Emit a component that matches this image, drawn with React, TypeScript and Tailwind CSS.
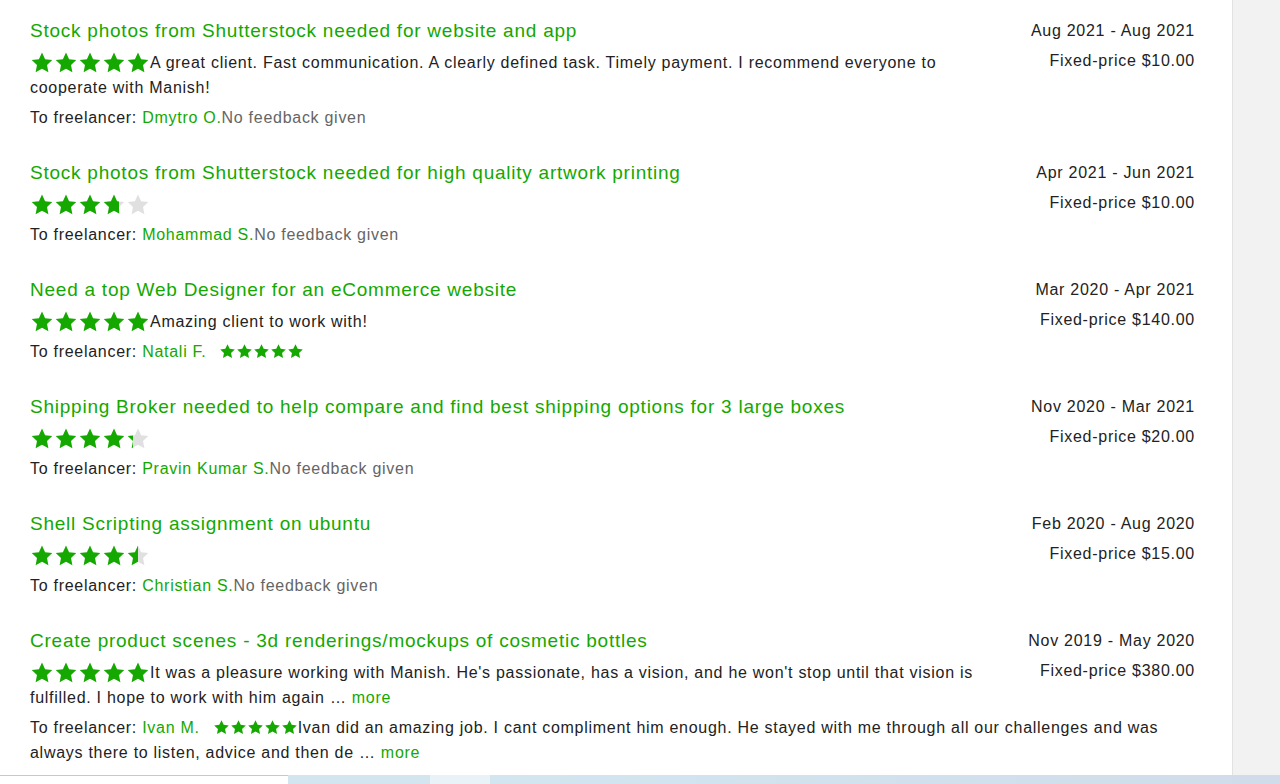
import React from 'react';

interface Job {
    title: string,
    from: string,
    price: string,
    rating: number,
    review?: string,
    reviewMore?: boolean,
    freelancer: string,
    freelancerRating?: number,
    freelancerReview?: string
};

const jobs: Job[] = [
    {
        title: "Stock photos from Shutterstock needed for website and app",
        from: "Aug 2021 - Aug 2021",
        price: "Fixed-price $10.00",
        rating: 5,
        review: "A great client. Fast communication. A clearly defined task. Timely payment. I recommend everyone to cooperate with Manish!",
        freelancer: "Dmytro O."
    },
    {
        title: "Stock photos from Shutterstock needed for high quality artwork printing",
        from: "Apr 2021 - Jun 2021",
        price: "Fixed-price $10.00",
        rating: 3.72,
        freelancer: "Mohammad S."
    },
    {
        title: "Need a top Web Designer for an eCommerce website",
        from: "Mar 2020 - Apr 2021",
        price: "Fixed-price $140.00",
        rating: 5,
        review: "Amazing client to work with!",
        freelancer: "Natali F.",
        freelancerRating: 5
    },
    {
        title: "Shipping Broker needed to help compare and find best shipping options for 3 large boxes",
        from: "Nov 2020 - Mar 2021",
        price: "Fixed-price $20.00",
        rating: 4.25,
        freelancer: "Pravin Kumar S."
    },
    {
        title: "Shell Scripting assignment on ubuntu",
        from: "Feb 2020 - Aug 2020",
        price: "Fixed-price $15.00",
        rating: 4.5,
        freelancer: "Christian S."
    },
    {
        title: "Create product scenes - 3d renderings/mockups of cosmetic bottles",
        from: "Nov 2019 - May 2020",
        price: "Fixed-price $380.00",
        rating: 5,
        review: "It was a pleasure working with Manish. He's passionate, has a vision, and he won't stop until that vision is fulfilled. I hope to work with him again",
        reviewMore: true,
        freelancer: "Ivan M.",
        freelancerRating: 5,
        freelancerReview: "Ivan did an amazing job. I cant compliment him enough. He stayed with me through all our challenges and was always there to listen, advice and then de"
    }
];

const STAR = "M12 1.6l3.1 6.6 7.2.9-5.3 5 1.4 7.2L12 17.8l-6.4 3.5 1.4-7.2-5.3-5 7.2-.9z";

function Star({ fill, size, id }: { fill: number, size: number, id: string }) {
    return (
        <svg width={size} height={size} viewBox="0 0 24 24" className="shrink-0">
            <defs>
                <linearGradient id={id} x1="0" x2="1" y1="0" y2="0">
                    <stop offset={fill} stopColor="#14a800" />
                    <stop offset={fill} stopColor="#e0e0e0" />
                </linearGradient>
            </defs>
            <path d={STAR} fill={`url(#${id})`} />
        </svg>
    );
}

function Stars({ rating, size, id }: { rating: number, size: number, id: string }) {
    return (
        <span className="inline-flex h-[25px] items-center align-top">
            {[0, 1, 2, 3, 4].map((i) => (
                <Star key={i} id={`${id}-${i}`} size={size} fill={Math.max(0, Math.min(1, rating - i))} />
            ))}
        </span>
    );
}

function JobRow({ job, index }: { job: Job, index: number }) {
    return (
        <div className="flex flex-col">
            <div className="flex justify-between">
                <div className="w-[975px]">
                    <div className="text-[19px] leading-[24px] tracking-[0.04em] text-[#14a800]">{job.title}</div>
                    <div className="mt-[7px] text-[16px] leading-[25px] text-[#222]">
                        <Stars rating={job.rating} size={24} id={`s${index}`} />
                        {job.review}
                        {job.reviewMore && <> … <span className="text-[#14a800]">more</span></>}
                    </div>
                </div>
                <div className="flex flex-col items-end text-[16px] leading-[24px] text-[#222]">
                    <div>{job.from}</div>
                    <div className="mt-[6px]">{job.price}</div>
                </div>
            </div>
            <div className="mt-[5px] text-[16px] leading-[25px] text-[#222]">
                To freelancer: <span className="text-[#14a800]">{job.freelancer}</span>
                {job.freelancerRating ? (
                    <>
                        <span className="inline-block w-[13px]" />
                        <Stars rating={job.freelancerRating} size={17} id={`f${index}`} />
                        {job.freelancerReview}
                        {job.freelancerReview && <> … <span className="text-[#14a800]">more</span></>}
                    </>
                ) : (
                    <span className="text-[#656565]">No feedback given</span>
                )}
            </div>
        </div>
    );
}

export default function App() {
    return (
        <div className="h-[784px] w-[1280px] overflow-hidden flex flex-col bg-white tracking-[0.045em]" style={{ fontFamily: '"Liberation Sans", Arial, sans-serif' }}>
            <div className="flex flex-1 min-h-0">
                <div className="flex-1 pl-[30px] pr-[37px] pt-[19px] flex flex-col gap-[31px]">
                    {jobs.map((job, i) => <JobRow key={`job-${i}`} job={job} index={i} />)}
                </div>
                <div className="w-[48px] bg-[#f2f2f2] border-l border-[#e2e2e2]" />
            </div>
            <div className="h-[9px] flex">
                <div className="w-[288px] bg-white border-t border-[#c8c8c8]" />
                <div className="w-[142px] bg-[#d3e6f0]" />
                <div className="w-[60px] bg-[#e8f2f7]" />
                <div className="flex-1 bg-gradient-to-r from-[#d2e6f0] to-[#d0dce9]" />
            </div>
        </div>
    );
}
